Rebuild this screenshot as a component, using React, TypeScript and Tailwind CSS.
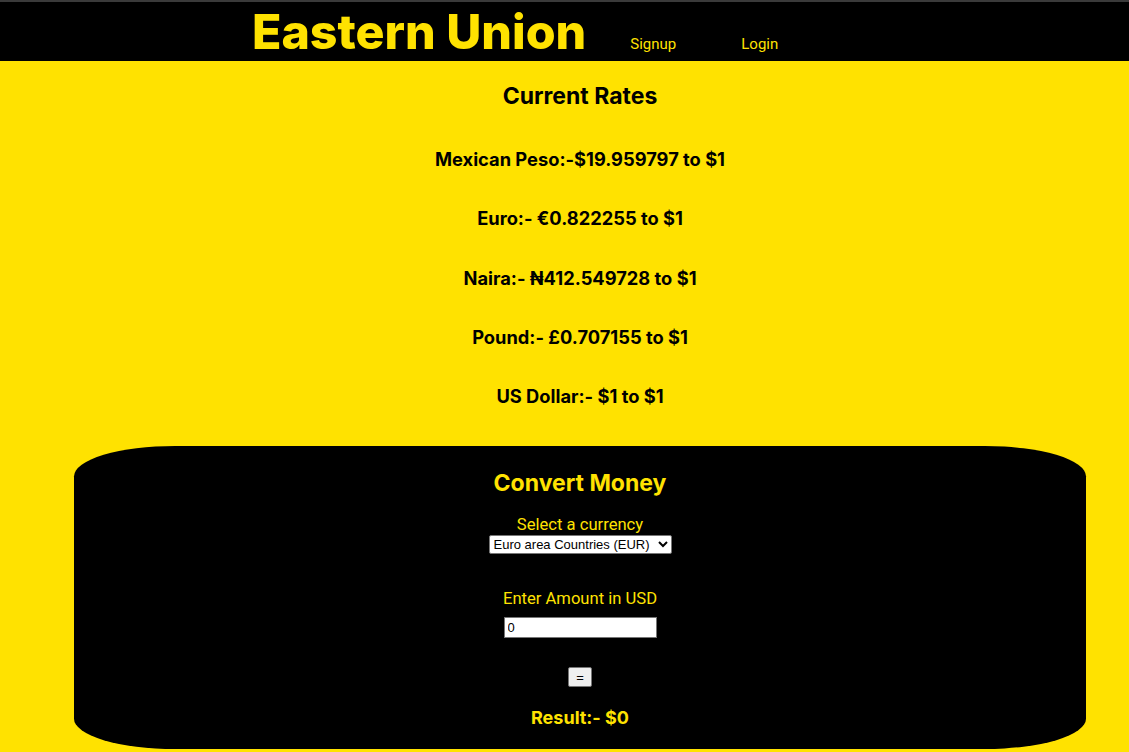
const rates = [
  'Mexican Peso:-$19.959797 to $1',
  'Euro:- €0.822255 to $1',
  'Naira:- ₦412.549728 to $1',
  'Pound:- £0.707155 to $1',
  'US Dollar:- $1 to $1',
];

function Header() {
  return (
    <header className="h-[61px] bg-black border-t-2 border-[#3a3a3a] flex items-end pl-[252px]">
      <h1 className="text-[48.3px] leading-[58px] font-extrabold text-[#ffe200]">Eastern Union</h1>
      <nav className="flex gap-[65px] ml-[44px] mb-[6px] text-[15px] text-[#ffe200] font-['Roboto',sans-serif]">
        <a href="#">Signup</a>
        <a href="#">Login</a>
      </nav>
    </header>
  );
}

function Converter() {
  return (
    <section className="w-[1012px] mx-auto mt-[38px] h-[303px] bg-black rounded-[10%] pt-[23px] flex flex-col items-center text-[#ffe200]">
      <h2 className="text-[23px] leading-[28px] font-bold">Convert Money</h2>
      <label className="mt-[18px] text-[16.6px] leading-[20px] font-['Roboto',sans-serif]">Select a currency</label>
      <select
        defaultValue="EUR"
        className="h-[19px] w-[183px] bg-white text-black border border-[#767676] rounded-[2px] text-[13px] font-['Liberation_Sans',sans-serif]"
      >
        <option value="EUR">Euro area Countries (EUR)</option>
        <option value="MXN">Mexico (MXN)</option>
        <option value="NGN">Nigeria (NGN)</option>
        <option value="GBP">United Kingdom (GBP)</option>
      </select>
      <label className="mt-[35px] text-[16.6px] leading-[20px] font-['Roboto',sans-serif]">Enter Amount in USD</label>
      <input
        type="text"
        defaultValue="0"
        className="mt-[8px] w-[153px] h-[21px] bg-white text-black border border-[#767676] px-[3px] text-[13px] font-['Liberation_Sans',sans-serif]"
      />
      <button className="mt-[29px] w-[24px] h-[20px] bg-[#efefef] text-black border border-[#767676] rounded-[2px] text-[13px] leading-none font-['Liberation_Sans',sans-serif]">
        =
      </button>
      <p className="mt-[20px] text-[18px] leading-[22px] font-bold">Result:- $0</p>
    </section>
  );
}

export default function App() {
  return (
    <div className="min-h-[752px] bg-[#ffe200] font-['Inter',sans-serif] text-black">
      <Header />
      <main className="pl-[31px] pb-[3px]">
        <h2 className="mt-[21px] text-center text-[23px] leading-[28px] font-bold">Current Rates</h2>
        <div className="mt-[37px] flex flex-col gap-[35.3px]">
          {rates.map((r) => (
            <h3 key={r} className="text-center text-[18.3px] leading-[24px] font-bold">
              {r}
            </h3>
          ))}
        </div>
        <Converter />
      </main>
    </div>
  );
}
